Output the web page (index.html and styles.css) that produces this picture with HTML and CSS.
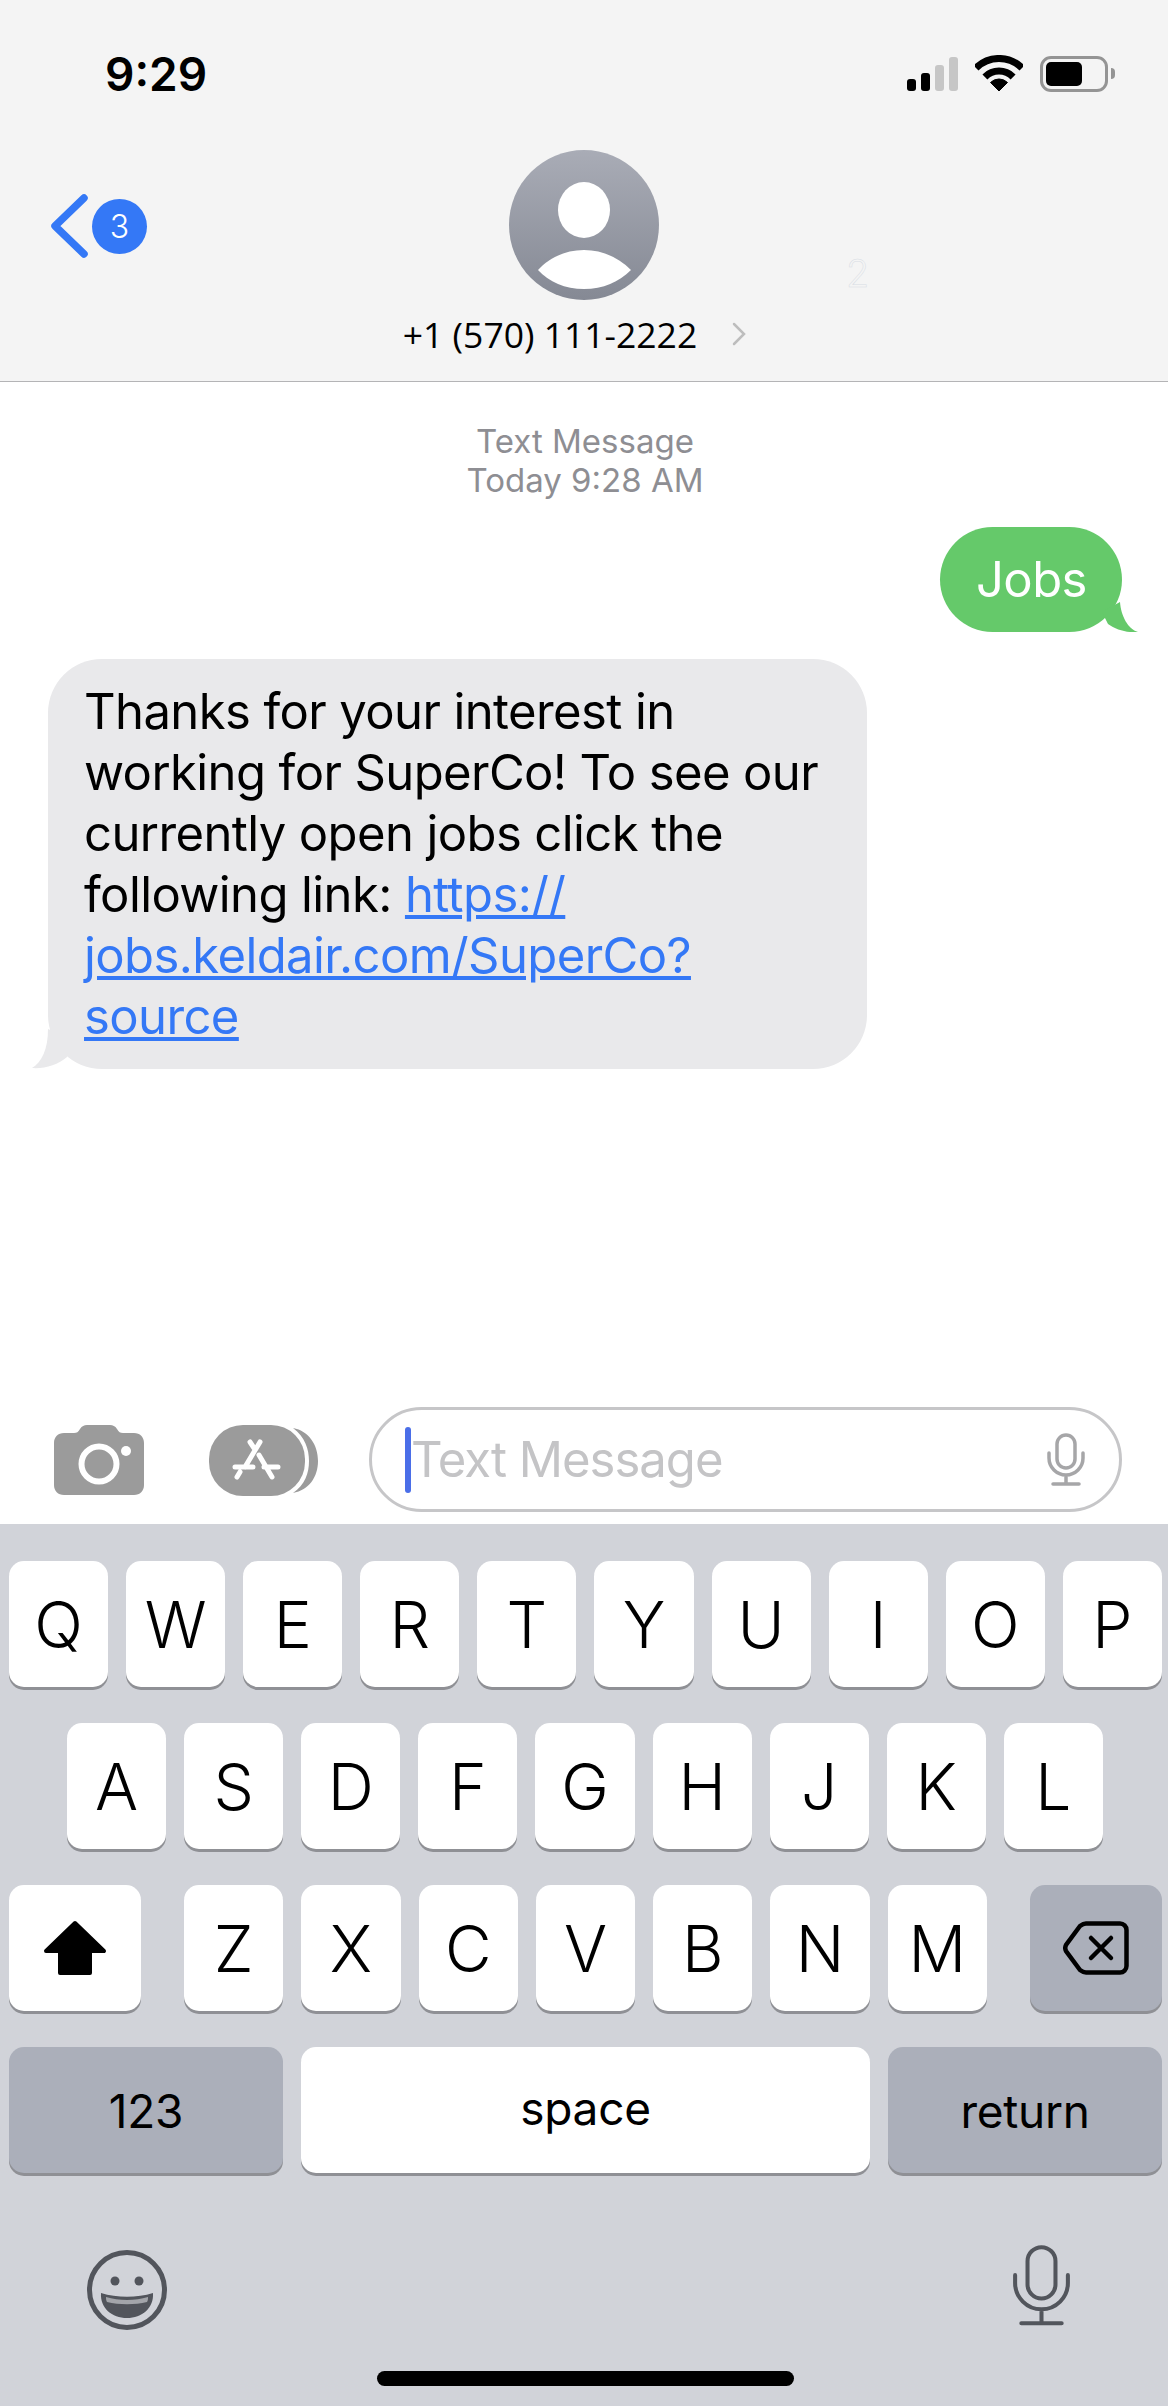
FILE: index.html
```html
<!DOCTYPE html>
<html lang="en">
  <head>
    <meta charset="UTF-8" />
    <title>Messages</title>
    <link rel="stylesheet" href="styles.css">
  </head>
  <body>
    <div class="phone">
      <header class="top">
        <div class="status">
          <span class="time">9:29</span>
          <div class="signal">
            <i class="bar bar1"></i><i class="bar bar2"></i><i class="bar bar3 off"></i><i class="bar bar4 off"></i>
          </div>
          <svg class="wifi" viewBox="0 0 48 37">
            <path d="M1 13A32.5 32.5 0 0 1 47 13M9.9 21.9A20 20 0 0 1 38.1 21.9" fill="none" stroke="#000" stroke-width="7" />
            <path d="M24 36L15.5 27.5A12 12 0 0 1 32.5 27.5Z" fill="#000" stroke="#000" stroke-linejoin="round" />
          </svg>
          <div class="battery"><i class="level"></i></div>
          <i class="nub"></i>
        </div>
        <div class="nav">
          <div class="back">
            <svg class="back-arrow" viewBox="0 0 38 64">
              <path d="M34 4L5 32L34 60" fill="none" stroke="#3478f6" stroke-width="7.5" stroke-linecap="round" stroke-linejoin="round" />
            </svg>
            <span class="badge">3</span>
          </div>
          <div class="contact">
            <svg class="avatar" viewBox="0 0 150 150">
              <defs>
                <linearGradient id="avatar-bg" x1="0" y1="0" x2="0" y2="1">
                  <stop offset="0" stop-color="#a9acb6" />
                  <stop offset="1" stop-color="#858994" />
                </linearGradient>
              </defs>
              <circle cx="75" cy="75" r="75" fill="url(#avatar-bg)" />
              <ellipse cx="75" cy="60" rx="26" ry="28" fill="#fff" />
              <path d="M29 120C40 108 56 100 75 100C94 100 110 108 122 120C110 132 94 139 75 139C56 139 40 132 29 120Z" fill="#fff" />
            </svg>
            <div class="name-row">
              <span class="name">+1 (570) 111-2222</span>
              <svg class="name-arrow" viewBox="0 0 14 24">
                <path d="M2 2L12 12L2 22" fill="none" stroke="#bdbdbd" stroke-width="2.5" stroke-linecap="round" />
              </svg>
            </div>
          </div>
        </div>
        <span class="ghost">2</span>
      </header>

      <main class="thread">
        <div class="stamp">Text Message<br>Today 9:28 AM</div>
        <div class="bubble sent">
          Jobs
          <svg class="tail tail-sent" viewBox="0 0 36 30">
            <path d="M18 0C19 14 26 27 36 30C26 31 14 28 6 22L0 10Z" fill="#65c96a" />
          </svg>
        </div>
        <div class="bubble received">
          Thanks for your interest in<br>
          working for SuperCo! To see our<br>
          currently open jobs click the<br>
          following link: <a href="#">https://</a><br>
          <a href="#">jobs.keldair.com/SuperCo?</a><br>
          <a href="#">source</a>
          <svg class="tail tail-received" viewBox="0 0 40 40">
            <path d="M16 0C16 20 10 33 0 39C12 40 26 36 35 28L40 10Z" fill="#e9e9eb" />
          </svg>
        </div>
      </main>

      <div class="composer">
        <svg class="camera" viewBox="0 0 90 70">
          <path d="M10 8H20C23 8 24 7 26 4C28 1 30 0 33 0H56C59 0 61 1 63 4C65 7 66 8 69 8H80C86 8 90 12 90 18V60C90 66 86 70 80 70H10C4 70 0 66 0 60V18C0 12 4 8 10 8Z" fill="#9b9b9b" />
          <ellipse cx="45" cy="39" rx="17.5" ry="17.5" fill="none" stroke="#fff" stroke-width="6" />
          <circle cx="72" cy="26" r="5" fill="#fff" />
        </svg>
        <svg class="apps" viewBox="0 0 109 71">
          <path d="M84 3C100 6 109 20 109 36C109 52 100 65 84 68C96 60 100 48 100 36C100 24 96 12 84 3Z" fill="#9b9b9b" />
          <rect x="0" y="0" width="96" height="71" rx="34" fill="#9b9b9b" />
          <path d="M51 17L36 42M41 17L45 23M50 30L63 52M26 42H44M55 42H69M31 47L28 52" fill="none" stroke="#fff" stroke-width="5" stroke-linecap="round" />
        </svg>
        <div class="field">
          <i class="caret"></i>
          <span class="placeholder">Text Message</span>
          <svg class="mic mic-small" viewBox="0 0 38 54">
            <rect x="10" y="2" width="18" height="33" rx="9" />
            <path d="M2 20V25A17 17 0 0 0 36 25V20M19 42V51M6 51H32" />
          </svg>
        </div>
      </div>

      <section class="keyboard">
        <div class="row">
          <button class="key">Q</button><button class="key">W</button><button class="key">E</button><button class="key">R</button><button class="key">T</button><button class="key">Y</button><button class="key">U</button><button class="key">I</button><button class="key">O</button><button class="key">P</button>
        </div>
        <div class="row row-home">
          <button class="key">A</button><button class="key">S</button><button class="key">D</button><button class="key">F</button><button class="key">G</button><button class="key">H</button><button class="key">J</button><button class="key">K</button><button class="key">L</button>
        </div>
        <div class="row row-shift">
          <button class="key key-wide">
            <svg class="shift" viewBox="0 0 64 56">
              <path d="M32 3L61 31H47V53H17V31H3Z" fill="#000" stroke="#000" stroke-width="4" stroke-linejoin="round" />
            </svg>
          </button>
          <div class="letters">
            <button class="key">Z</button><button class="key">X</button><button class="key">C</button><button class="key">V</button><button class="key">B</button><button class="key">N</button><button class="key">M</button>
          </div>
          <button class="key key-wide key-dark">
            <svg class="delete" viewBox="0 0 66 54">
              <path d="M23 2.5H57A6.5 6.5 0 0 1 63.5 9V45A6.5 6.5 0 0 1 57 51.5H23C21 51.5 19 50.5 17 49L3 30C2 28 2 26 3 24L17 5C19 3.5 21 2.5 23 2.5Z" fill="none" stroke="#000" stroke-width="4.5" />
              <path d="M28 17L48 37M48 17L28 37" fill="none" stroke="#000" stroke-width="4.5" stroke-linecap="round" />
            </svg>
          </button>
        </div>
        <div class="row row-bottom">
          <button class="key key-dark key-text key-num">123</button>
          <button class="key key-text key-space">space</button>
          <button class="key key-dark key-text key-num">return</button>
        </div>
        <div class="extras">
          <svg class="emoji" viewBox="0 0 80 80">
            <circle cx="40" cy="40" r="37.5" fill="none" stroke="#52555c" stroke-width="5" />
            <circle cx="28" cy="31" r="4.5" fill="#52555c" />
            <circle cx="52" cy="31" r="4.5" fill="#52555c" />
            <path d="M14 43C30 48 50 48 66 43C67 58 55 68 40 68C25 68 13 58 14 43Z" fill="#52555c" />
            <path d="M19 47C32 51 48 51 61 47C61 49 61 50 60 52C48 55 32 55 20 52C19 50 19 49 19 47Z" fill="#a3a5aa" />
          </svg>
          <svg class="mic mic-big" viewBox="0 0 38 54">
            <rect x="10" y="2" width="18" height="33" rx="9" />
            <path d="M2 20V25A17 17 0 0 0 36 25V20M19 42V51M6 51H32" />
          </svg>
        </div>
        <div class="home-bar"></div>
      </section>
    </div>
  </body>
</html>
```

FILE: styles.css
```css
* {
  box-sizing: border-box;
}
body {
  margin: 0;
  font-family: Inter, "Liberation Sans", sans-serif;
  background-color: white;
  color: black;
}
.phone {
  width: 1168px;
  height: 2406px;
  display: flex;
  flex-direction: column;
  overflow: hidden;
}

/* header */
.top {
  position: relative;
  height: 382px;
  background-color: #f4f4f4;
  border-bottom: 1px solid #b4b4b6;
}
.status {
  height: 150px;
  padding: 55px 0 0 105px;
  display: flex;
  align-items: flex-start;
}
.time {
  font-size: 46px;
  font-weight: 600;
  line-height: 38px;
  width: 802px;
}
.signal {
  display: flex;
  align-items: flex-end;
  gap: 5px;
  height: 36px;
  width: 68px;
}
.bar {
  width: 9px;
  border-radius: 3px;
  background-color: black;
}
.bar1 { height: 12px; }
.bar2 { height: 18px; }
.bar3 { height: 26px; }
.bar4 { height: 34px; }
.bar.off {
  background-color: #c6c6c6;
}
.wifi {
  width: 48px;
  height: 37px;
  margin-right: 17px;
}
.battery {
  width: 68px;
  height: 36px;
  margin-top: 1px;
  padding: 3px;
  border: 3px solid #949494;
  border-radius: 11px;
}
.level {
  display: block;
  width: 36px;
  height: 100%;
  background-color: black;
  border-radius: 5px;
}
.nub {
  width: 4px;
  height: 11px;
  margin: 13px 0 0 3px;
  background-color: #949494;
  border-radius: 0 5px 5px 0;
}
.nav {
  display: grid;
  grid-template-columns: 1fr 400px 1fr;
}
.back {
  display: flex;
  align-items: center;
  gap: 4px;
  padding: 44px 0 0 50px;
  align-self: start;
}
.back-arrow {
  width: 38px;
  height: 64px;
}
.badge {
  width: 55px;
  height: 55px;
  border-radius: 50%;
  background-color: #3478f6;
  color: white;
  font-size: 32px;
  font-weight: 300;
  line-height: 55px;
  text-align: center;
}
.contact {
  display: flex;
  flex-direction: column;
  align-items: center;
}
.avatar {
  width: 150px;
  height: 150px;
  display: block;
}
.name-row {
  display: flex;
  align-items: center;
  margin-top: 15px;
  margin-left: -19px;
  white-space: nowrap;
}
.name {
  font-family: "Open Sans", sans-serif;
  font-size: 35.5px;
  line-height: 38px;
}
.name-arrow {
  width: 14px;
  height: 24px;
  margin-left: 35px;
}
.ghost {
  position: absolute;
  left: 846px;
  top: 250px;
  font-size: 38px;
  font-weight: 300;
  color: #f4f4f4;
  -webkit-text-stroke: 0.5px #d8dde4;
}

/* messages */
.thread {
  flex: 1;
  padding: 40px 46px 0 48px;
  display: flex;
  flex-direction: column;
}
.stamp {
  color: #8e8e93;
  font-size: 33px;
  line-height: 39px;
  text-align: center;
  margin-bottom: 27px;
}
.bubble {
  position: relative;
  font-size: 49px;
  letter-spacing: -0.6px;
  line-height: 61px;
  border-radius: 54px;
  white-space: nowrap;
}
.sent {
  align-self: flex-end;
  width: 182px;
  height: 105px;
  padding: 22px 0 0 36px;
  background-color: #65c96a;
  color: white;
}
.received {
  align-self: flex-start;
  width: 819px;
  height: 410px;
  margin-top: 27px;
  padding: 22px 0 0 36px;
  background-color: #e9e9eb;
}
.received a {
  color: #3478f6;
}
.tail {
  position: absolute;
  bottom: 0;
}
.tail-sent {
  right: -16px;
  width: 36px;
  height: 30px;
}
.tail-received {
  left: -16px;
  width: 40px;
  height: 40px;
}

/* input row */
.composer {
  height: 117px;
  padding: 0 46px 12px 54px;
  display: flex;
  align-items: flex-start;
}
.camera {
  width: 90px;
  height: 70px;
  margin: 18px 65px 0 0;
}
.apps {
  width: 109px;
  height: 71px;
  margin: 18px 51px 0 0;
}
.field {
  flex: 1;
  height: 105px;
  border: 3px solid #c6c6c8;
  border-radius: 53px;
  display: flex;
  align-items: center;
  padding: 0 34px 0 33px;
}
.caret {
  width: 6px;
  height: 66px;
  background-color: #4a6ee8;
  border-radius: 3px;
}
.placeholder {
  flex: 1;
  font-size: 49px;
  letter-spacing: -1px;
  color: #c4c4c6;
}
.mic rect,
.mic path {
  fill: none;
  stroke-width: 3.5;
  stroke-linecap: round;
}
.mic-small {
  width: 38px;
  height: 54px;
}
.mic-small rect,
.mic-small path {
  stroke: #a6a6a8;
}
.mic-big {
  width: 59px;
  height: 84px;
  margin-top: -6px;
}
.mic-big rect,
.mic-big path {
  stroke: #52555c;
  stroke-width: 2.6;
}

/* keyboard */
.keyboard {
  height: 882px;
  background-color: #d1d3d9;
  padding: 37px 6px 0 9px;
  display: flex;
  flex-direction: column;
}
.row {
  display: flex;
  gap: 18px;
  height: 126px;
  margin-bottom: 36px;
}
.key {
  flex: 1;
  border: none;
  padding: 0;
  background-color: white;
  border-radius: 15px;
  box-shadow: 0 3px 0 #8f9095;
  font-family: Inter, sans-serif;
  font-size: 64px;
  font-weight: 300;
  color: black;
  display: flex;
  align-items: center;
  justify-content: center;
}
.row-home {
  padding: 0 59px 0 58px;
}
.row-shift {
  gap: 43px;
}
.letters {
  flex: 1;
  display: flex;
  gap: 18px;
}
.key-wide {
  flex: none;
  width: 132px;
}
.key-dark {
  background-color: #abafba;
}
.key-text {
  font-size: 46px;
  font-weight: 400;
  letter-spacing: -0.3px;
  padding-top: 2px;
}
.key-num {
  flex: none;
  width: 274px;
}
.key-space {
  padding: 0 0 5px;
}
.shift {
  width: 64px;
  height: 56px;
}
.delete {
  width: 66px;
  height: 54px;
}
.extras {
  display: flex;
  justify-content: space-between;
  align-items: flex-start;
  padding: 0 91px 0 78px;
  margin-top: 41px;
  height: 121px;
}
.emoji {
  width: 80px;
  height: 80px;
}
.home-bar {
  width: 417px;
  height: 15px;
  background-color: black;
  border-radius: 8px;
  margin-left: 368px;
}
```
